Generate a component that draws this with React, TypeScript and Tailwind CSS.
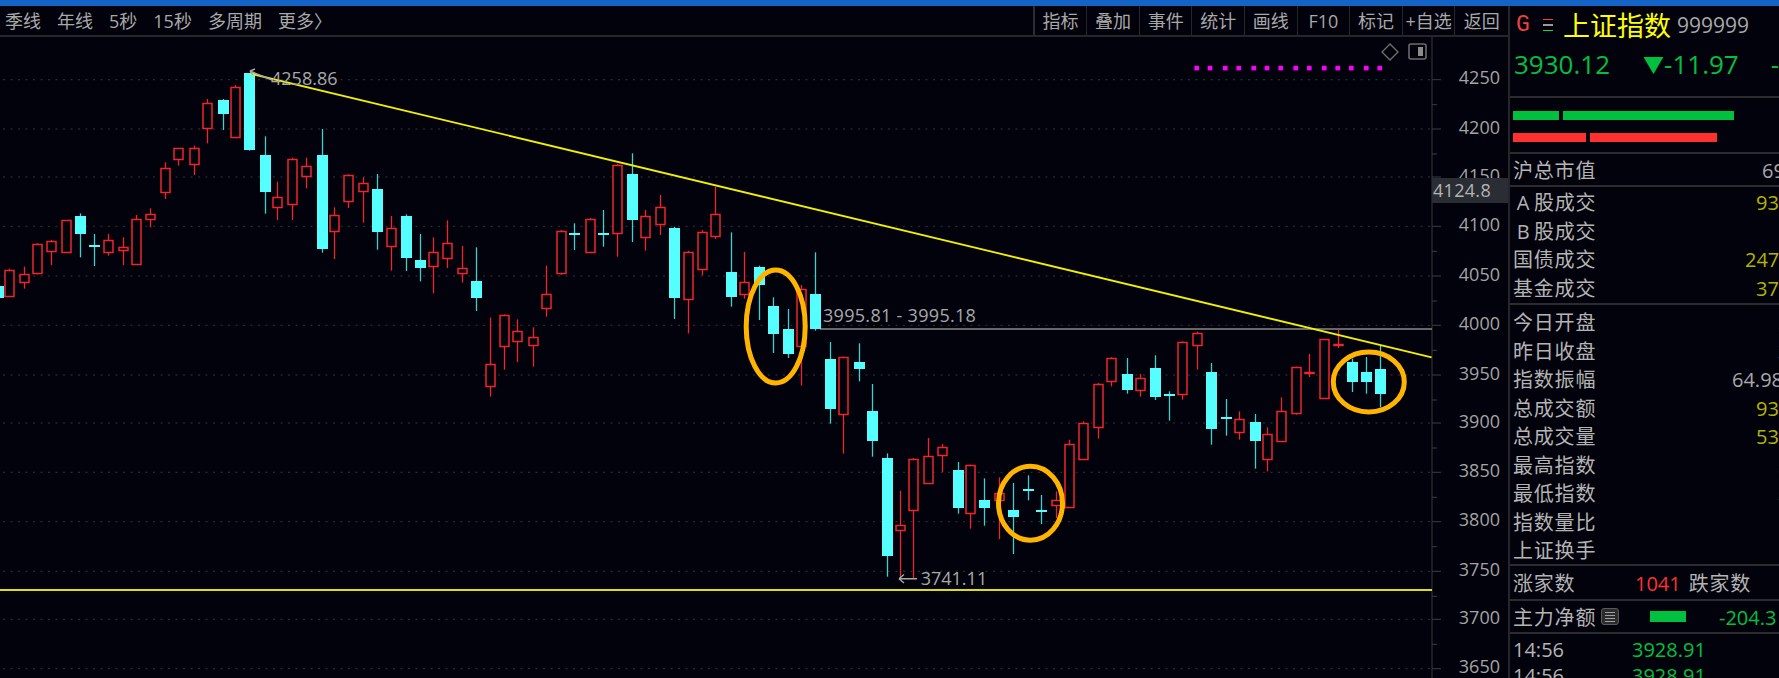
const red = '#f0242c'
const cyan = '#55ffff'
const wickCyan = '#3fd0d0'

// [kind, x, wickTop, bodyTop, bodyBottom, wickBottom], read off the zoomed crops
type Row = [string, number, number, number, number, number]

const scaleX = 600 / 1568
const low = 1014

const leftRows: Row[] = [
  ['c', -3, 858, 858, 895, 895], ['r', 24, 806, 810, 888, 890], ['r', 63, 800, 823, 847, 866],
  ['r', 99, 730, 733, 820, 823], ['r', 134, 720, 724, 752, 795], ['r', 173, 660, 660, 757, 757],
  ['c', 210, 640, 648, 701, 772], ['c', 248, 702, 736, 740, 798], ['r', 283, 702, 719, 757, 767],
  ['r', 322, 712, 742, 751, 795], ['r', 358, 645, 656, 793, 793], ['r', 393, 625, 643, 657, 682],
  ['r', 432, 487, 503, 577, 597], ['r', 467, 445, 445, 478, 497], ['r', 507, 437, 445, 491, 525],
  ['r', 542, 297, 310, 383, 430], ['c', 583, 297, 301, 342, 390], ['r', 616, 255, 260, 410, 410],
  ['c', 653, 220, 220, 450, 452], ['c', 693, 409, 464, 575, 641], ['r', 726, 545, 590, 622, 660],
  ['r', 765, 473, 476, 613, 660], ['r', 800, 473, 499, 527, 565], ['c', 842, 387, 464, 747, 758],
  ['r', 875, 622, 644, 694, 777], ['r', 910, 523, 525, 604, 624], ['r', 950, 532, 548, 572, 668],
  ['c', 987, 522, 568, 697, 749], ['r', 1024, 648, 683, 739, 812], ['c', 1062, 643, 648, 773, 813],
  ['c', 1100, 702, 779, 805, 844], ['r', 1134, 712, 755, 797, 880], ['r', 1169, 661, 728, 775, 804],
  ['r', 1208, 738, 805, 820, 848], ['c', 1245, 742, 842, 895, 933], ['r', 1283, 953, low + 79, low + 143, low + 176],
  ['r', 1318, 943, 945, low + 25, low + 95], ['r', 1353, 958, 993, low + 8, low + 72],
  ['r', 1393, 982, 1012, low + 22, low + 86], ['r', 1428, 797, 882, 923, 950], ['r', 1467, 690, 692, 820, 824],
  ['c', 1502, 670, 700, 706, 750], ['r', 1542, 654, 656, 757, 757],
]

const midRows: Row[] = [
  ['c', 9, 630, 700, 706, 740], ['r', 45, 492, 494, 698, 770], ['c', 85, 460, 522, 661, 726],
  ['r', 119, 630, 648, 712, 752], ['r', 158, 585, 620, 672, 705], ['c', 195, 680, 685, 895, 957],
  ['r', 232, 752, 756, 896, 1000], ['r', 267, 690, 697, 806, 826], ['r', 303, 560, 643, 707, 717],
  ['c', 344, 697, 815, 890, 920], ['r', 377, 756, 846, 882, 896], ['c', 418, 797, 802, 854, 960],
  ['c', 454, 892, 918, 1003, low + 45], ['c', 493, 927, 986, low + 47, low + 60], ['r', 526, 855, 868, low + 25, low + 143],
  ['c', 562, 757, 882, 986, 992], ['c', 603, low + 12, low + 62, low + 213, low + 257],
  ['r', 636, low + 56, low + 56, low + 229, low + 347], ['c', 677, low + 16, low + 71, low + 92, low + 130],
  ['c', 712, low + 138, low + 220, low + 308, low + 356], ['c', 752, low + 346, low + 359, low + 655, low + 716],
  ['r', 785, low + 458, low + 560, low + 575, low + 720], ['r', 820, low + 360, low + 363, low + 516, low + 722],
  ['r', 859, low + 300, low + 353, low + 436, low + 436], ['r', 895, low + 318, low + 326, low + 350, low + 403],
  ['c', 936, low + 372, low + 395, low + 511, low + 527], ['r', 969, low + 380, low + 381, low + 525, low + 572],
  ['c', 1006, low + 421, low + 485, low + 511, low + 563], ['r', 1044, low + 418, low + 466, low + 485, low + 603],
  ['c', 1080, low + 435, low + 516, low + 538, low + 648], ['c', 1119, low + 412, low + 453, low + 457, low + 487],
  ['c', 1155, low + 471, low + 517, low + 521, low + 558], ['r', 1192, low + 460, low + 485, low + 502, low + 540],
  ['r', 1228, low + 305, low + 318, low + 508, low + 508], ['r', 1263, low + 250, low + 255, low + 363, low + 364],
  ['r', 1302, low + 135, low + 138, low + 268, low + 302], ['r', 1338, low + 58, low + 61, low + 130, low + 145],
  ['c', 1379, low + 60, low + 107, low + 155, low + 167], ['r', 1412, low + 108, low + 119, low + 157, low + 176],
  ['c', 1453, low + 52, low + 89, low + 178, low + 186], ['c', 1488, low + 160, low + 169, low + 172, low + 248],
  ['r', 1522, low + 10, low + 11, low + 169, low + 185],
]

const rightRows: Row[] = [
  ['r', 48, 995, 1000, low + 22, low + 95], ['c', 85, low + 75, low + 103, low + 272, low + 320],
  ['c', 123, low + 183, low + 238, low + 244, low + 293], ['r', 158, low + 220, low + 242, low + 282, low + 305],
  ['c', 199, low + 228, low + 251, low + 308, low + 392], ['r', 232, low + 268, low + 287, low + 363, low + 400],
  ['r', 267, low + 178, low + 218, low + 310, low + 310], ['r', 307, low + 86, low + 88, low + 224, low + 230],
  ['r', 342, low + 48, low + 101, low + 105, low + 117], ['r', 381, low + 3, low + 3, low + 179, low + 179],
  ['r', 418, 990, low + 19, low + 21, low + 30], ['c', 454, low + 62, low + 72, low + 132, low + 162],
  ['c', 491, low + 57, low + 103, low + 133, low + 167], ['c', 527, low + 22, low + 94, low + 169, low + 208],
]

const gridYs = [79.7, 129, 177, 226.3, 276, 325.3, 375, 423, 472.3, 521.7, 571.3, 619.3, 668.7]
const axisLabels = [4250, 4200, 4150, 4100, 4050, 4000, 3950, 3900, 3850, 3800, 3750, 3700, 3650]
const dotXs = [1196.7, 1210, 1225.3, 1238.7, 1253.7, 1267, 1280.7, 1295.7, 1309.3, 1324.3, 1337.7, 1351.3, 1366.3, 1379.7]

function Candle({ row, ox }: { row: Row; ox: number }) {
  const [kind, zx, wt, bt, bb, wb] = row
  const x = Math.floor(ox + zx * scaleX) + 0.5
  const yT = wt / 3
  const y1 = Math.round(bt / 3)
  const y2 = Math.round(bb / 3)
  const yB = wb / 3
  if (kind === 'c') {
    return (
      <g>
        <line x1={x} x2={x} y1={yT} y2={yB} stroke={wickCyan} strokeWidth={1.3} />
        <rect x={x - 5.5} y={y1} width={11} height={Math.max(y2 - y1, 2)} fill={cyan} />
      </g>
    )
  }
  return (
    <g>
      <line x1={x} x2={x} y1={yT} y2={y1} stroke={red} strokeWidth={1.3} />
      <line x1={x} x2={x} y1={y2} y2={yB} stroke={red} strokeWidth={1.3} />
      <rect x={x - 4.5} y={y1 + 0.5} width={9} height={Math.max(y2 - y1, 1)} fill="#02020c" stroke={red} strokeWidth={1.5} />
    </g>
  )
}

function Chart() {
  return (
    <svg viewBox="0 37 1508 641" className="block w-[1508px] h-[641px]">
      {gridYs.map(y => (
        <line key={y} x1={3} x2={1432} y1={y} y2={y} stroke="#34343a" strokeWidth={1} strokeDasharray="2 5.5" />
      ))}

      <line x1={1432} x2={1432} y1={37} y2={678} stroke="#26262a" strokeWidth={1.5} />
      {gridYs.map(y => (
        <line key={y} x1={1432} x2={1441} y1={y} y2={y} stroke="#3c3c42" strokeWidth={1} />
      ))}
      {gridYs.map(y => (
        <line key={y} x1={1432} x2={1437} y1={y + 25} y2={y + 25} stroke="#3c3c42" strokeWidth={1} />
      ))}
      {axisLabels.map((v, i) => (
        <text key={v} x={1500} y={gridYs[i] - 2.5} textAnchor="end" dominantBaseline="central" fontSize={18} fill="#a4a4a4">
          {v}
        </text>
      ))}

      <line x1={820} x2={1432} y1={329} y2={329} stroke="#8a8a8a" strokeWidth={1.5} />
      <line x1={0} x2={1432} y1={590} y2={590} stroke="#e0e000" strokeWidth={1.8} />

      {leftRows.map((r, i) => <Candle key={i} row={r} ox={0} />)}
      {midRows.map((r, i) => <Candle key={i} row={r} ox={600} />)}
      {rightRows.map((r, i) => <Candle key={i} row={r} ox={1179} />)}

      <line x1={250} x2={1431.6} y1={73.5} y2={357.3} stroke="#f0f000" strokeWidth={1.8} />

      {/* hand drawn circles */}
      <ellipse cx={775.7} cy={326.5} rx={29.5} ry={56.5} fill="none" stroke="#ffb400" strokeWidth={5} />
      <ellipse cx={1030.5} cy={503.2} rx={32} ry={37} fill="none" stroke="#ffb400" strokeWidth={5} />
      <ellipse cx={1368.8} cy={382} rx={35.5} ry={30} fill="none" stroke="#ffb400" strokeWidth={5} />

      <path d="M272 80 L250 71 M250 71 L255 69 M250 71 L253 75" fill="none" stroke="#a8a8a8" strokeWidth={1.4} />
      <text x={271} y={78} dominantBaseline="central" fontSize={18} fill="#a8a8a8">4258.86</text>
      <text x={823} y={315} dominantBaseline="central" fontSize={18} letterSpacing={0.3} fill="#a8a8a8">3995.81 - 3995.18</text>
      <path d="M917 578.7 L899 578.7 M899 578.7 L904 574.5 M899 578.7 L904 583" fill="none" stroke="#a8a8a8" strokeWidth={1.4} />
      <text x={920.7} y={578} dominantBaseline="central" fontSize={18} fill="#a8a8a8">3741.11</text>

      <path d="M1390 44 L1398 52 L1390 60 L1382 52 Z" fill="none" stroke="#6c6c6c" strokeWidth={1.4} />
      <rect x={1409} y={44} width={17} height={15} rx={2} fill="none" stroke="#6c6c6c" strokeWidth={1.6} />
      <rect x={1418} y={47} width={5} height={9} fill="#8c8c8c" />
      {dotXs.map(x => (
        <rect key={x} x={x - 2.3} y={65.8} width={4.6} height={4.6} fill="#ff00ff" />
      ))}

      <rect x={1432} y={178} width={76} height={25} fill="#2a2d33" />
      <text x={1433} y={190} dominantBaseline="central" fontSize={18} letterSpacing={0.3} fill="#b4b4b4">4124.8</text>
    </svg>
  )
}

function Toolbar() {
  const tabs = ['季线', '年线', '5秒', '15秒', '多周期', '更多〉']
  const tools = ['指标', '叠加', '事件', '统计', '画线', 'F10', '标记', '+自选', '返回']
  return (
    <div className="flex h-[31px] justify-between border-b-2 border-[#26262a] text-[18px] leading-none text-[#a8a8a8]">
      <div className="flex items-center gap-[16px] pl-[5px]">
        {tabs.map(t => <span key={t}>{t}</span>)}
      </div>
      <div className="flex border-l-2 border-[#2e2e32]">
        {tools.map(t => (
          <span key={t} className="flex w-[52.6px] items-center justify-center whitespace-nowrap border-r border-[#26262a] last:border-r-0">
            {t}
          </span>
        ))}
      </div>
    </div>
  )
}

const olive = 'text-[#b4b400]'
const narrow = 'inline-block w-[21px] text-center'

const block1 = [
  { label: <><span className={narrow}>A</span>股成交</>, value: '93', cls: `ml-[160px] ${olive}` },
  { label: <><span className={narrow}>B</span>股成交</>, value: '', cls: '' },
  { label: <>国债成交</>, value: '247', cls: `ml-[149px] ${olive}` },
  { label: <>基金成交</>, value: '37', cls: `ml-[160px] ${olive}` },
]

const block2 = [
  { label: '今日开盘', value: '3', cls: 'ml-[182px] text-[#ff3030]' },
  { label: '昨日收盘', value: '3', cls: 'ml-[182px] text-[#a8a8a8]' },
  { label: '指数振幅', value: '64.98', cls: 'ml-[136px] text-[#a8a8a8]' },
  { label: '总成交额', value: '93', cls: `ml-[160px] ${olive}` },
  { label: '总成交量', value: '53', cls: `ml-[160px] ${olive}` },
  { label: '最高指数', value: '3', cls: 'ml-[182px] text-[#ff3030]' },
  { label: '最低指数', value: '3', cls: 'ml-[182px] text-[#00c040]' },
  { label: '指数量比', value: '', cls: '' },
  { label: '上证换手', value: '', cls: '' },
]

function Sidebar() {
  return (
    <div className="h-full w-[271px] shrink-0 overflow-hidden border-l-2 border-[#26262a] text-[20px] leading-none text-[#b4b4b4]">
      <div className="h-[92px] border-b-2 border-[#2c2c2c]">
        <div className="flex h-[38px] items-center whitespace-nowrap">
          <span className="ml-[6px] w-[14px] font-['Liberation_Mono',monospace] text-[23px] text-[#f04040]">G</span>
          <span className="ml-[13px] flex w-[10px] flex-col gap-[4px]">
            <i className="h-[1.5px] bg-[#f04040]" />
            <i className="h-[1.5px] bg-[#9a9a9a]" />
            <i className="h-[1.5px] bg-[#00e040]" />
          </span>
          <span className="ml-[10px] text-[27px] text-[#ffff00]">上证指数</span>
          <span className="ml-[6px] text-[21px] text-[#a8a8a8]">999999</span>
        </div>
        <div className="mt-[7px] flex items-center whitespace-nowrap text-[#00c040]">
          <span className="ml-[4px] text-[26px]">3930.12</span>
          <span className="ml-[33px] text-[21px]">▼</span>
          <span className="text-[26px]">-11.97</span>
          <span className="ml-[32px] text-[26px]">-</span>
        </div>
      </div>

      <div className="flex h-[56px] flex-col gap-[13px] border-b-2 border-[#2c2c2c] pl-[3px] pt-[13px]">
        <div className="flex gap-[4px]">
          <i className="h-[9px] w-[46px] bg-[#00c040]" />
          <i className="h-[9px] w-[171px] bg-[#00c040]" />
        </div>
        <div className="flex gap-[4px]">
          <i className="h-[9px] w-[73px] bg-[#ff3030]" />
          <i className="h-[9px] w-[127px] bg-[#ff3030]" />
        </div>
      </div>

      <div className="flex h-[33px] items-center whitespace-nowrap border-b-2 border-[#2c2c2c] pl-[3px] pt-[3px]">
        <span className="w-[83px] tracking-[0.8px]">沪总市值</span>
        <span className="ml-[166px] text-[#a8a8a8]">69</span>
      </div>

      <div className="flex h-[118px] flex-col border-b-2 border-[#2c2c2c] pl-[3px] pt-[2px]">
        {block1.map((r, i) => (
          <div key={i} className="flex h-[28.5px] items-center whitespace-nowrap">
            <span className="w-[83px] tracking-[0.8px]">{r.label}</span>
            <span className={r.cls}>{r.value}</span>
          </div>
        ))}
      </div>

      <div className="flex h-[261px] flex-col border-b-2 border-[#2c2c2c] pl-[3px] pt-[4px]">
        {block2.map(r => (
          <div key={r.label} className="flex h-[28.5px] shrink-0 items-center whitespace-nowrap">
            <span className="w-[83px] tracking-[0.8px]">{r.label}</span>
            <span className={r.cls}>{r.value}</span>
          </div>
        ))}
      </div>

      <div className="flex h-[35px] items-center whitespace-nowrap border-b-2 border-[#2c2c2c] pl-[3px] pt-[2px]">
        <span className="w-[122px] tracking-[0.8px]">涨家数</span>
        <span className="text-[#ff3030]">1041</span>
        <span className="ml-[8px] tracking-[0.8px]">跌家数</span>
      </div>

      <div className="flex h-[33px] items-center whitespace-nowrap border-b-2 border-[#2c2c2c] pl-[3px]">
        <span className="w-[88px] pt-[3px] tracking-[0.8px]">主力净额</span>
        <span className="flex h-[17px] w-[18px] flex-col justify-center gap-[2px] rounded-[3px] border border-[#5a5a5a] bg-[#2c2c2c] px-[3px]">
          <i className="h-[1px] bg-[#a0a0a0]" />
          <i className="h-[1px] bg-[#a0a0a0]" />
          <i className="h-[1px] bg-[#a0a0a0]" />
          <i className="h-[1px] bg-[#a0a0a0]" />
        </span>
        <i className="ml-[31px] h-[11px] w-[36px] bg-[#00c040]" />
        <span className="ml-[33px] pt-[3px] text-[#00c040]">-204.3</span>
      </div>

      <div className="flex flex-col pl-[3px] pt-[3px]">
        {['a', 'b'].map(k => (
          <div key={k} className="flex h-[26px] items-center whitespace-nowrap">
            <span className="w-[119px]">14:56</span>
            <span className="text-[#00c040]">3928.91</span>
          </div>
        ))}
      </div>
    </div>
  )
}

export default function App() {
  return (
    <div className="flex h-[678px] w-[1779px] flex-col overflow-hidden bg-[#02020c] font-['Open_Sans','Noto_Sans_CJK_SC',sans-serif]">
      <div className="h-[6px] shrink-0 bg-[#1464c8]" />
      <div className="flex h-[672px] min-h-0">
        <div className="w-[1508px] shrink-0">
          <Toolbar />
          <Chart />
        </div>
        <Sidebar />
      </div>
    </div>
  )
}
